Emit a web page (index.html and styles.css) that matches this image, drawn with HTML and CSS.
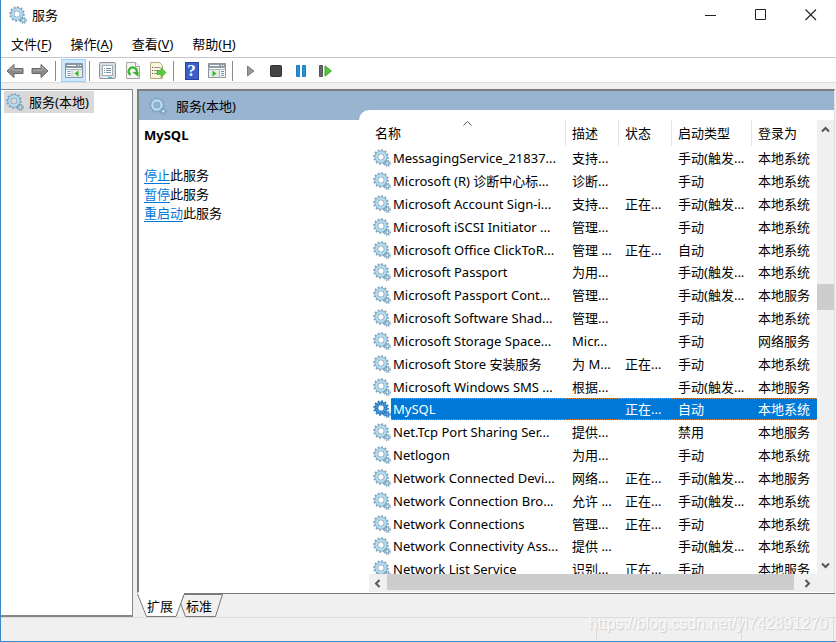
FILE: index.html
```html
<!DOCTYPE html>
<html lang="zh-CN">
<head>
    <meta charset="UTF-8">
    <meta name="viewport" content="width=device-width, initial-scale=1.0">
    <title>服务</title>
    <link rel="stylesheet" href="styles.css">
</head>
<body>
    <!-- 公用图标 -->
    <svg class="defs" width="0" height="0">
      <symbol id="gear" viewBox="0 0 18 18">
        <circle cx="8" cy="8" r="6.8" fill="none" stroke="#7fa3bd" stroke-width="2" stroke-dasharray="1.8 1.76"/>
        <circle cx="8" cy="8" r="4.6" fill="none" stroke="#7196b0" stroke-width="3.8"/>
        <circle cx="8" cy="8" r="4.6" fill="none" stroke="#b5dbef" stroke-width="2.6"/>
        <circle cx="14.3" cy="14.3" r="2.9" fill="none" stroke="#7196b0" stroke-width="1.4" stroke-dasharray="1.2 1.08"/>
        <circle cx="14.3" cy="14.3" r="1.7" fill="#e8f3f9" stroke="#86adc7" stroke-width="1.4"/>
      </symbol>
      <symbol id="gear-on" viewBox="0 0 18 18">
        <circle cx="8" cy="8" r="6.8" fill="none" stroke="#2b7fc4" stroke-width="2" stroke-dasharray="1.8 1.76"/>
        <circle cx="8" cy="8" r="4.6" fill="none" stroke="#2678bd" stroke-width="3.8"/>
        <circle cx="8" cy="8" r="4.6" fill="none" stroke="#5fa9dd" stroke-width="2" stroke-dasharray="1 1"/>
        <circle cx="14.3" cy="14.3" r="2.9" fill="none" stroke="#2b7fc4" stroke-width="1.4" stroke-dasharray="1.2 1.08"/>
        <circle cx="14.3" cy="14.3" r="1.7" fill="#8cc0e6" stroke="#2b7fc4" stroke-width="1.4"/>
      </symbol>
      <symbol id="arrow" viewBox="0 0 18 16">
        <path d="M1 8l7-6.5v4h9v5H8v4z" fill="#8a8a8a" stroke="#666" stroke-linejoin="round"/>
        <path d="M3 7.5l4-3.7V7h9" fill="none" stroke="#b0b0b0"/>
      </symbol>
    </svg>

    <header class="titlebar">
      <svg class="gear"><use href="#gear"/></svg>
      <h1>服务</h1>
      <button aria-label="最小化"><svg width="12" height="12"><path d="M0 6.5h11" stroke="#222"/></svg></button>
      <button aria-label="最大化"><svg width="12" height="12"><path d="M.5 .5h10v10H.5z" fill="none" stroke="#222"/></svg></button>
      <button aria-label="关闭"><svg width="12" height="12"><path d="M.5 .5l10.5 10.5M11 .5L.5 11" stroke="#222" stroke-width="1.1"/></svg></button>
    </header>

    <nav class="menu">
      <button>文件(<u>F</u>)</button>
      <button>操作(<u>A</u>)</button>
      <button>查看(<u>V</u>)</button>
      <button>帮助(<u>H</u>)</button>
    </nav>

    <div class="toolbar">
      <button aria-label="后退"><svg width="18" height="16"><use href="#arrow"/></svg></button>
      <button aria-label="前进"><svg class="flip" width="18" height="16"><use href="#arrow"/></svg></button>
      <i class="sep"></i>
      <button class="on" aria-label="显示/隐藏控制台树">
        <svg width="18" height="16">
          <path d="M.5 .5h17v14H.5z" fill="#fff" stroke="#8795a0"/>
          <path d="M1 1h16v4H1z" fill="#8795a0"/><path d="M2 2.5h9M13 2.5h1M15 2.5h1" stroke="#fff"/>
          <path d="M1 6.5h16M7 7v8" stroke="#a7b2ba"/>
          <path d="M2.5 8.5h3M2.5 10.5h3M2.5 12.5h3" stroke="#7294ad"/>
          <path d="M8 7h9v7H8z" fill="#e4ece5"/><path d="M13.5 7.5v6L9.5 10.5z" fill="#37b82c"/>
        </svg>
      </button>
      <i class="sep"></i>
      <button aria-label="属性">
        <svg width="17" height="18">
          <rect x=".5" y=".5" width="16" height="16" rx="1" fill="#d8dde1" stroke="#8b949b"/>
          <path d="M3.5 3.5h10v10h-10z" fill="#fff" stroke="#a4adb4"/>
          <path d="M5 6.5h1M7 6.5h5M5 8.5h1M7 8.5h5M5 10.5h1M7 10.5h5" stroke="#7c92a3"/>
          <path d="M4 15.5h4" stroke="#fff"/><path d="M9 15.5h4" stroke="#4db3e2"/>
        </svg>
      </button>
      <button aria-label="刷新">
        <svg width="16" height="18">
          <path d="M1.5 .5h9l4 4v12h-13z" fill="#f5f5f3" stroke="#a5a5a0"/><path d="M10.5 .5v4h4" fill="#fff" stroke="#a5a5a0"/>
          <path d="M5.5 12.8a4 4 0 1 1 6-2" fill="none" stroke="#35b52b" stroke-width="2.2"/>
          <path d="M7.5 10h6v5z" fill="#35b52b"/>
        </svg>
      </button>
      <button aria-label="导出列表">
        <svg width="18" height="18">
          <path d="M1.5 .5h9l3 3v13h-12z" fill="#fcf6d9" stroke="#b1aa85"/>
          <path d="M3 5.5h1M3 8.5h1M3 11.5h1" stroke="#555"/><path d="M5 5.5h6M5 8.5h5M5 11.5h5" stroke="#9291a0"/>
          <path d="M8 8.5h4V5.5l5 5-5 5v-3H8z" fill="#55cc3b" stroke="#38a429" stroke-width=".6"/>
        </svg>
      </button>
      <i class="sep"></i>
      <button class="help" aria-label="帮助"><span>?</span></button>
      <button aria-label="显示/隐藏操作窗格">
        <svg width="18" height="16">
          <path d="M.5 .5h17v14H.5z" fill="#fff" stroke="#8b959b"/>
          <path d="M1 1h16v4H1z" fill="#929da3"/><path d="M2 2.5h9M13 2.5h1M15 2.5h1" stroke="#fff"/>
          <path d="M1 6.5h16M11.5 7v8" stroke="#a7b2ba"/>
          <path d="M13 8.5h3M13 10.5h3M13 12.5h3" stroke="#5e93bc"/>
          <path d="M1 7h10v7H1z" fill="#e4ece5"/><path d="M4.5 7.5v6l4-3z" fill="#37b82c"/>
        </svg>
      </button>
      <i class="sep"></i>
      <button aria-label="启动"><svg width="10" height="12"><path d="M1.5 1v10l6.5-5z" fill="#999" stroke="#7c7c7c"/></svg></button>
      <button aria-label="停止"><svg width="12" height="12"><rect x=".5" y=".5" width="11" height="11" rx="1" fill="#444" stroke="#333"/></svg></button>
      <button aria-label="暂停"><svg width="10" height="12"><path d="M.5 .5h3v11h-3zM6.5 .5h3v11h-3z" fill="#2594dc" stroke="#1c7cc0"/></svg></button>
      <button aria-label="重新启动"><svg width="13" height="12"><path d="M.5 .5h3v11h-3z" fill="#666" stroke="#555"/><path d="M6 .8v10.4L12.3 6z" fill="#52ca37" stroke="#37a526"/></svg></button>
    </div>

    <main class="console">
      <aside class="tree">
        <button><svg class="gear"><use href="#gear"/></svg>服务(本地)</button>
      </aside>

      <div class="right">
        <section class="panel">
          <div class="banner"><svg class="gear"><use href="#gear"/></svg>服务(本地)</div>
          <div class="content">
            <div class="detail">
              <h2>MySQL</h2>
              <p><a href="#">停止</a>此服务</p>
              <p><a href="#">暂停</a>此服务</p>
              <p><a href="#">重启动</a>此服务</p>
            </div>

            <div class="list">
              <div class="rows">
                <table>
                  <colgroup><col class="c-icon"><col><col class="c-mid"><col class="c-mid"><col class="c-type"><col class="c-login"></colgroup>
                  <thead>
                    <tr>
                      <th colspan="2">名称<svg class="sort" width="9" height="5"><path d="M.5 4.5l4-4 4 4" fill="none" stroke="#555"/></svg></th>
                      <th>描述</th><th>状态</th><th>启动类型</th><th>登录为</th>
                    </tr>
                  </thead>
                  <tbody>
                    <tr><td><svg class="gear"><use href="#gear"/></svg></td><td>MessagingService_21837...</td><td>支持...</td><td></td><td>手动(触发...</td><td>本地系统</td></tr>
                    <tr><td><svg class="gear"><use href="#gear"/></svg></td><td>Microsoft (R) 诊断中心标...</td><td>诊断...</td><td></td><td>手动</td><td>本地系统</td></tr>
                    <tr><td><svg class="gear"><use href="#gear"/></svg></td><td>Microsoft Account Sign-i...</td><td>支持...</td><td>正在...</td><td>手动(触发...</td><td>本地系统</td></tr>
                    <tr><td><svg class="gear"><use href="#gear"/></svg></td><td>Microsoft iSCSI Initiator ...</td><td>管理...</td><td></td><td>手动</td><td>本地系统</td></tr>
                    <tr><td><svg class="gear"><use href="#gear"/></svg></td><td>Microsoft Office ClickToR...</td><td>管理 ...</td><td>正在...</td><td>自动</td><td>本地系统</td></tr>
                    <tr><td><svg class="gear"><use href="#gear"/></svg></td><td>Microsoft Passport</td><td>为用...</td><td></td><td>手动(触发...</td><td>本地系统</td></tr>
                    <tr><td><svg class="gear"><use href="#gear"/></svg></td><td>Microsoft Passport Cont...</td><td>管理...</td><td></td><td>手动(触发...</td><td>本地服务</td></tr>
                    <tr><td><svg class="gear"><use href="#gear"/></svg></td><td>Microsoft Software Shad...</td><td>管理...</td><td></td><td>手动</td><td>本地系统</td></tr>
                    <tr><td><svg class="gear"><use href="#gear"/></svg></td><td>Microsoft Storage Space...</td><td>Micr...</td><td></td><td>手动</td><td>网络服务</td></tr>
                    <tr><td><svg class="gear"><use href="#gear"/></svg></td><td>Microsoft Store 安装服务</td><td>为 M...</td><td>正在...</td><td>手动</td><td>本地系统</td></tr>
                    <tr><td><svg class="gear"><use href="#gear"/></svg></td><td>Microsoft Windows SMS ...</td><td>根据...</td><td></td><td>手动(触发...</td><td>本地服务</td></tr>
                    <tr class="selected"><td><svg class="gear"><use href="#gear-on"/></svg></td><td>MySQL</td><td></td><td>正在...</td><td>自动</td><td>本地系统</td></tr>
                    <tr><td><svg class="gear"><use href="#gear"/></svg></td><td>Net.Tcp Port Sharing Ser...</td><td>提供...</td><td></td><td>禁用</td><td>本地服务</td></tr>
                    <tr><td><svg class="gear"><use href="#gear"/></svg></td><td>Netlogon</td><td>为用...</td><td></td><td>手动</td><td>本地系统</td></tr>
                    <tr><td><svg class="gear"><use href="#gear"/></svg></td><td>Network Connected Devi...</td><td>网络...</td><td>正在...</td><td>手动(触发...</td><td>本地服务</td></tr>
                    <tr><td><svg class="gear"><use href="#gear"/></svg></td><td>Network Connection Bro...</td><td>允许 ...</td><td>正在...</td><td>手动(触发...</td><td>本地系统</td></tr>
                    <tr><td><svg class="gear"><use href="#gear"/></svg></td><td>Network Connections</td><td>管理...</td><td>正在...</td><td>手动</td><td>本地系统</td></tr>
                    <tr><td><svg class="gear"><use href="#gear"/></svg></td><td>Network Connectivity Ass...</td><td>提供 ...</td><td></td><td>手动(触发...</td><td>本地系统</td></tr>
                    <tr><td><svg class="gear"><use href="#gear"/></svg></td><td>Network List Service</td><td>识别...</td><td>正在...</td><td>手动</td><td>本地服务</td></tr>
                  </tbody>
                </table>
              </div>
              <div class="vscroll">
                <button aria-label="向上"><svg width="9" height="7"><path d="M1 5.5l3.5-3.5L8 5.5" fill="none" stroke="#555" stroke-width="2"/></svg></button>
                <i class="thumb"></i>
                <button aria-label="向下"><svg width="9" height="7"><path d="M1 1.5L4.5 5 8 1.5" fill="none" stroke="#555" stroke-width="2"/></svg></button>
              </div>
              <div class="hscroll">
                <button aria-label="向左"><svg width="7" height="9"><path d="M5.5 1L2 4.5 5.5 8" fill="none" stroke="#555" stroke-width="2"/></svg></button>
                <i class="thumb"></i>
                <button aria-label="向右"><svg width="7" height="9"><path d="M1.5 1L5 4.5 1.5 8" fill="none" stroke="#555" stroke-width="2"/></svg></button>
              </div>
            </div>
          </div>
        </section>

        <div class="tabs">
          <svg class="tab-shape" width="86" height="24">
            <path d="M47 1.5h38.5L78.5 23.5h-30L43.5 10z" fill="#f0f0f0" stroke="#777"/>
            <path d="M0 0l9 23.5h30L47 1V0z" fill="#fff"/>
            <path d="M.5 1l9 22.5h29.5L47 1.5" fill="none" stroke="#777"/>
          </svg>
          <button>扩展</button>
          <button>标准</button>
        </div>
      </div>
    </main>

    <footer class="status"><i></i><i></i><i></i></footer>
    <div class="watermark">https://blog.csdn.net/yi742891270</div>
</body>
</html>
```
FILE: styles.css
```css
* {
    margin: 0;
    padding: 0;
    box-sizing: border-box;
}
body {
    display: flex;
    flex-direction: column;
    height: 100vh;
    overflow: hidden;
    position: relative;
    border-left: 1px solid #3c87c4;
    border-bottom: 1px solid #3c87c4;
    background: #f0f0f0;
    color: #000;
    font: 13px/18px "Noto Sans", "Noto Sans CJK SC", sans-serif;
}
button {
    border: 0;
    background: none;
    font: inherit;
    color: inherit;
}
svg {
    display: block;
}
.defs {
    position: absolute;
}
.gear {
    width: 18px;
    height: 18px;
    flex: none;
}
/* 标题栏 */
.titlebar {
    display: flex;
    align-items: center;
    height: 29px;
    padding-left: 8px;
    background: #fff;
}
.titlebar h1 {
    flex: 1;
    padding-left: 5px;
    font-size: 13px;
    font-weight: normal;
}
.titlebar button {
    display: flex;
    justify-content: center;
    width: 50px;
}
/* 菜单 */
.menu {
    display: flex;
    gap: 19px;
    height: 29px;
    padding: 1px 10px 0;
    background: #fff;
    border-bottom: 1px solid #c6c6ca;
}
.menu u {
    text-underline-offset: 2px;
}
/* 工具栏 */
.toolbar {
    display: flex;
    align-items: center;
    height: 25px;
    padding: 1px 0 0 1px;
    background: #fff;
    border-bottom: 1px solid #dcdcdc;
}
.toolbar button {
    display: flex;
    align-items: center;
    justify-content: center;
    width: 25px;
    height: 23px;
}
.toolbar .on {
    background: #cce8ff;
    border: 1px solid #99d1ff;
}
.toolbar .sep {
    width: 1px;
    height: 20px;
    margin: 0 5px 0 3px;
    background: #8d8d8d;
}
.flip {
    transform: scaleX(-1);
}
.help span {
    width: 14px;
    height: 18px;
    background: #3a5fcd;
    border: 1px solid #28439b;
    color: #fff;
    font: bold 17px/16px "Liberation Serif", serif;
}
/* 主区域 */
.console {
    display: flex;
    flex: 1;
    min-height: 0;
    gap: 4px;
    padding: 6px 1px 0 0;
}
.tree {
    width: 132px;
    padding: 1px 2px;
    background: #fff;
    border: 1px solid #828790;
    border-left: 0;
    border-bottom-width: 2px;
}
.tree button {
    display: flex;
    align-items: center;
    gap: 5px;
    height: 22px;
    margin-left: 1px;
    padding: 0 5px 0 2px;
    background: #d9d9d9;
}
.right {
    display: flex;
    flex-direction: column;
    flex: 1;
    min-width: 0;
}
.panel {
    display: flex;
    flex-direction: column;
    flex: 1;
    min-height: 0;
    border: 2px solid #7c7c7c;
    border-right: 1px solid #e3e3e3;
    border-bottom: 1px solid #fff;
}
.banner {
    display: flex;
    align-items: center;
    gap: 9px;
    height: 29px;
    padding-left: 10px;
    background: #99b4d1;
}
.content {
    display: flex;
    flex: 1;
    min-height: 0;
    background: #fff;
}
.detail {
    width: 220px;
    padding: 6px 5px;
}
.detail h2 {
    margin-bottom: 22px;
    font-size: 13px;
    line-height: 18px;
}
.detail p {
    line-height: 19px;
}
.detail a {
    color: #0078d7;
    text-underline-offset: 3px;
}
/* 服务列表 */
.list {
    display: grid;
    grid-template-columns: 1fr 17px;
    grid-template-rows: 1fr 18px;
    flex: 1;
    min-width: 0;
    margin-top: -10px;
    padding: 10px 0 0 10px;
    background: #fff;
    border-top-left-radius: 10px;
}
.rows {
    min-height: 0;
    overflow: hidden;
}
table {
    width: 100%;
    table-layout: fixed;
    border-spacing: 0;
}
.c-icon {
    width: 22px;
}
.c-mid {
    width: 53px;
}
.c-type {
    width: 80px;
}
.c-login {
    width: 65px;
}
th {
    position: relative;
    height: 26px;
    padding-left: 6px;
    border-right: 1px solid #e5e5e5;
    font-weight: normal;
    text-align: left;
}
th:last-child {
    border-right: 0;
}
.sort {
    position: absolute;
    top: 1px;
    left: 48%;
}
tbody tr {
    height: 23px;
}
tbody tr:nth-child(6n) {
    height: 22px;
}
td {
    padding-left: 6px;
    line-height: 18px;
    white-space: nowrap;
}
td:first-child {
    padding-left: 4px;
}
td:nth-child(2) {
    padding-left: 2px;
}
/* 选中行上下的虚线 */
.selected td:not(:first-child) {
    background-color: #0078d7;
    background-image: linear-gradient(90deg, #e08a3c 50%, transparent 50%), linear-gradient(90deg, #e08a3c 50%, transparent 50%);
    background-size: 2px 1px;
    background-position: 0 0, 0 100%;
    background-repeat: repeat-x;
    color: #fff;
}
/* 滚动条 */
.vscroll {
    display: flex;
    flex-direction: column;
    background: #f0f0f0;
}
.vscroll .thumb {
    height: 26px;
    margin: auto 0 246px;
    background: #cdcdcd;
}
.vscroll button,
.hscroll button {
    display: flex;
    align-items: center;
    justify-content: center;
    width: 17px;
    height: 18px;
}
.hscroll {
    display: flex;
    grid-column: 1 / 3;
    padding-right: 18px;
    background: #f0f0f0;
}
.hscroll .thumb {
    flex: 1;
    height: 16px;
    margin: 0 5px 0 1px;
    background: #cdcdcd;
}
/* 底部标签 */
.tabs {
    display: flex;
    position: relative;
    height: 24px;
    border-top: 1px solid #7c7c7c;
    padding-left: 10px;
    gap: 13px;
}
.tabs button {
    position: relative;
}
.tab-shape {
    position: absolute;
    top: -1px;
    left: 0;
}
/* 状态栏 */
.status {
    display: flex;
    justify-content: flex-end;
    height: 24px;
    border-top: 1px solid #dcdcdc;
}
.status i {
    border-right: 1px solid #dcdcdc;
    width: 145px;
}
.status i:last-child {
    width: 92px;
    margin-right: 2px;
}
.watermark {
    position: absolute;
    right: 8px;
    bottom: 7px;
    color: rgba(255, 255, 255, .8);
    font: 16px/20px "Liberation Sans", Arial, sans-serif;
    text-shadow: 1px 1px 1px #ccc;
}
```
